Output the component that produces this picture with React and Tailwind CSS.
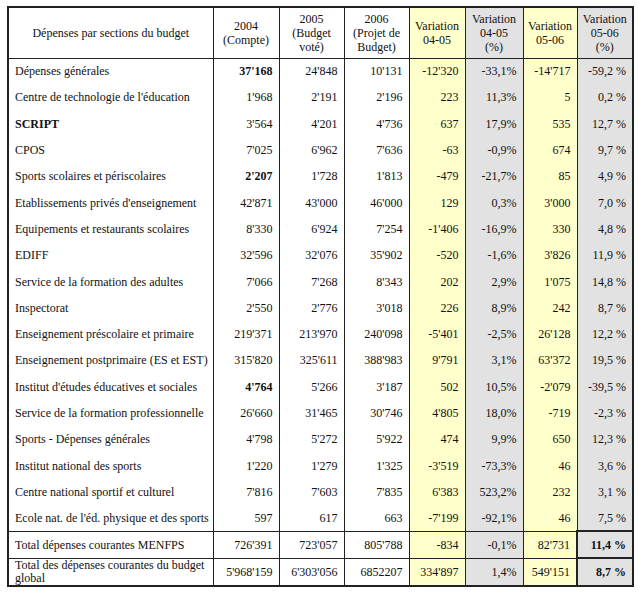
import React from 'react';

const rows = [
  ["Dépenses générales", "37'168", "24'848", "10'131", "-12'320", "-33,1%", "-14'717", "-59,2 %"],
  ["Centre de technologie de l'éducation", "1'968", "2'191", "2'196", "223", "11,3%", "5", "0,2 %"],
  ["SCRIPT", "3'564", "4'201", "4'736", "637", "17,9%", "535", "12,7 %"],
  ["CPOS", "7'025", "6'962", "7'636", "-63", "-0,9%", "674", "9,7 %"],
  ["Sports scolaires et périscolaires", "2'207", "1'728", "1'813", "-479", "-21,7%", "85", "4,9 %"],
  ["Etablissements privés d'enseignement", "42'871", "43'000", "46'000", "129", "0,3%", "3'000", "7,0 %"],
  ["Equipements et restaurants scolaires", "8'330", "6'924", "7'254", "-1'406", "-16,9%", "330", "4,8 %"],
  ["EDIFF", "32'596", "32'076", "35'902", "-520", "-1,6%", "3'826", "11,9 %"],
  ["Service de la formation des adultes", "7'066", "7'268", "8'343", "202", "2,9%", "1'075", "14,8 %"],
  ["Inspectorat", "2'550", "2'776", "3'018", "226", "8,9%", "242", "8,7 %"],
  ["Enseignement préscolaire et primaire", "219'371", "213'970", "240'098", "-5'401", "-2,5%", "26'128", "12,2 %"],
  ["Enseignement postprimaire (ES et EST)", "315'820", "325'611", "388'983", "9'791", "3,1%", "63'372", "19,5 %"],
  ["Institut d'études éducatives et sociales", "4'764", "5'266", "3'187", "502", "10,5%", "-2'079", "-39,5 %"],
  ["Service de la formation professionnelle", "26'660", "31'465", "30'746", "4'805", "18,0%", "-719", "-2,3 %"],
  ["Sports - Dépenses générales", "4'798", "5'272", "5'922", "474", "9,9%", "650", "12,3 %"],
  ["Institut national des sports", "1'220", "1'279", "1'325", "-3'519", "-73,3%", "46", "3,6 %"],
  ["Centre national sportif et culturel", "7'816", "7'603", "7'835", "6'383", "523,2%", "232", "3,1 %"],
  ["Ecole nat. de l'éd. physique et des sports", "597", "617", "663", "-7'199", "-92,1%", "46", "7,5 %"],
];

// cells drawn in bold: "row-col"
const bold = new Set(['0-1', '2-0', '4-1', '12-1']);

const colBg = ['', '', '', '', 'bg-[#ffffcc]', 'bg-[#e2e2e2]', 'bg-[#ffffcc]', 'bg-[#e2e2e2]'];

const headers = [
  ['Dépenses par sections du budget'],
  ['2004', '(Compte)'],
  ['2005', '(Budget', 'voté)'],
  ['2006', '(Projet de', 'Budget)'],
  ['Variation', '04-05'],
  ['Variation', '04-05', '(%)'],
  ['Variation', '05-06'],
  ['Variation', '05-06', '(%)'],
];

export default function App() {
  return (
    <div className="bg-white w-[639px] h-[593px] pt-[6px] pl-[7px] text-[12px] text-[#111]" style={{ fontFamily: '"Liberation Serif", "Times New Roman", serif' }}>
      <table className="table-fixed border-collapse border-2 border-[#222]">
        <colgroup>
          <col className="w-[205px]" />
          <col className="w-[66px]" />
          <col className="w-[65px]" />
          <col className="w-[65px]" />
          <col className="w-[56px]" />
          <col className="w-[58px]" />
          <col className="w-[54px]" />
          <col className="w-[56px]" />
        </colgroup>
        <thead>
          <tr className="h-[51px]">
            {headers.map((h, i) => (
              <th key={i} className={`font-normal text-center align-middle leading-[14px] border border-[#222] ${colBg[i]}`}>
                {h.map((line, j) => (
                  <div key={j}>{line}</div>
                ))}
              </th>
            ))}
          </tr>
        </thead>
        <tbody>
          {rows.map((r, ri) => (
            <tr key={ri} className="h-[26.3px]">
              {r.map((v, ci) => (
                <td
                  key={ci}
                  className={`border-x border-[#222] whitespace-nowrap ${ci === 0 ? 'text-left pl-[6px]' : 'text-right pr-[6px]'} ${colBg[ci]} ${bold.has(`${ri}-${ci}`) ? 'font-bold' : ''}`}
                >
                  {v}
                </td>
              ))}
            </tr>
          ))}
          <tr className="h-[27px] border-t border-[#222]">
            <td className="border border-[#222] pl-[6px] whitespace-nowrap">Total dépenses courantes MENFPS</td>
            <td className="border border-[#222] text-right pr-[6px]">726'391</td>
            <td className="border border-[#222] text-right pr-[6px]">723'057</td>
            <td className="border border-[#222] text-right pr-[6px]">805'788</td>
            <td className="border border-[#222] text-right pr-[6px] bg-[#ffffcc]">-834</td>
            <td className="border border-[#222] text-right pr-[6px] bg-[#e2e2e2]">-0,1%</td>
            <td className="border border-[#222] text-right pr-[6px] bg-[#ffffcc]">82'731</td>
            <td className="border-2 border-[#222] text-right pr-[6px] bg-[#e2e2e2] font-bold">11,4 %</td>
          </tr>
          <tr className="h-[27px]">
            <td className="border border-[#222] pl-[6px] leading-[13px]">Total des dépenses courantes du budget global</td>
            <td className="border border-[#222] text-right pr-[6px]">5'968'159</td>
            <td className="border border-[#222] text-right pr-[6px]">6'303'056</td>
            <td className="border border-[#222] text-right pr-[6px]">6852207</td>
            <td className="border border-[#222] text-right pr-[6px] bg-[#ffffcc]">334'897</td>
            <td className="border border-[#222] text-right pr-[6px] bg-[#e2e2e2]">1,4%</td>
            <td className="border border-[#222] text-right pr-[6px] bg-[#ffffcc]">549'151</td>
            <td className="border-2 border-[#222] text-right pr-[6px] bg-[#e2e2e2] font-bold">8,7 %</td>
          </tr>
        </tbody>
      </table>
    </div>
  );
}
